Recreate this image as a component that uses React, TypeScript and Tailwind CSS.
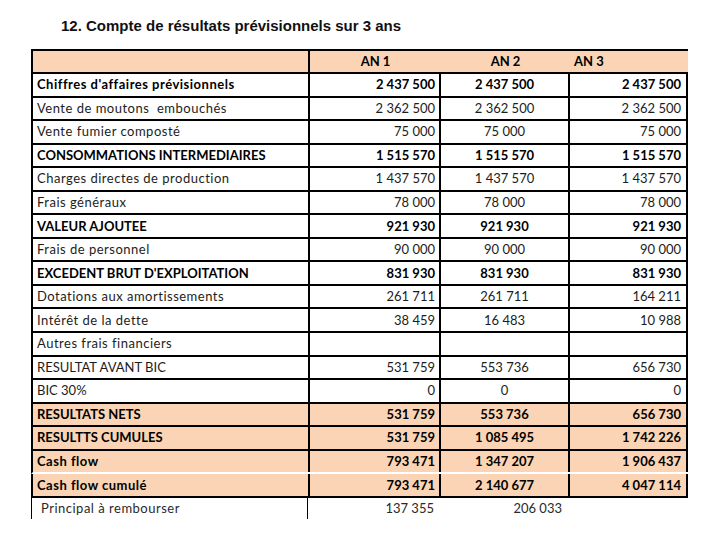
import React from "react"

type Row = {
  label: string
  values: string[]
  bold?: boolean
  peach?: boolean
  whiteLine?: boolean
}

const rows: Row[] = [
  { label: "Chiffres d'affaires prévisionnels", values: ["2 437 500", "2 437 500", "2 437 500"], bold: true },
  { label: "Vente de moutons  embouchés", values: ["2 362 500", "2 362 500", "2 362 500"] },
  { label: "Vente fumier composté", values: ["75 000", "75 000", "75 000"] },
  { label: "CONSOMMATIONS INTERMEDIAIRES", values: ["1 515 570", "1 515 570", "1 515 570"], bold: true },
  { label: "Charges directes de production", values: ["1 437 570", "1 437 570", "1 437 570"] },
  { label: "Frais généraux", values: ["78 000", "78 000", "78 000"] },
  { label: "VALEUR AJOUTEE", values: ["921 930", "921 930", "921 930"], bold: true },
  { label: "Frais de personnel", values: ["90 000", "90 000", "90 000"] },
  { label: "EXCEDENT BRUT D'EXPLOITATION", values: ["831 930", "831 930", "831 930"], bold: true },
  { label: "Dotations aux amortissements", values: ["261 711", "261 711", "164 211"] },
  { label: "Intérêt de la dette", values: ["38 459", "16 483", "10 988"] },
  { label: "Autres frais financiers", values: ["", "", ""] },
  { label: "RESULTAT AVANT BIC", values: ["531 759", "553 736", "656 730"] },
  { label: "BIC 30%", values: ["0", "0", "0"] },
  { label: "RESULTATS NETS", values: ["531 759", "553 736", "656 730"], bold: true, peach: true },
  { label: "RESULTTS CUMULES", values: ["531 759", "1 085 495", "1 742 226"], bold: true, peach: true },
  { label: "Cash flow", values: ["793 471", "1 347 207", "1 906 437"], bold: true, peach: true, whiteLine: true },
  { label: "Cash flow cumulé", values: ["793 471", "2 140 677", "4 047 114"], bold: true, peach: true },
]

const cols = "grid grid-cols-[277px_131px_129px_118px]"

function TableRow({ row }: { row: Row }) {
  // lowercase labels run a bit wider in the original font
  const mixed = row.label !== row.label.toUpperCase()
  return (
    <div
      className={`${cols} h-[23.56px] border-l-2 border-b-2 border-l-black ${
        row.whiteLine ? "border-b-white" : "border-b-black"
      } ${row.peach ? "bg-[#fad4b4]" : "bg-white"} ${row.bold ? "font-bold text-black" : "text-[#1c1c1c]"}`}
    >
      <div
        className={`flex items-center border-r-2 border-black pl-[4px] whitespace-pre ${
          mixed ? "tracking-[0.5px]" : ""
        }`}
      >
        {row.label}
      </div>
      <div className="flex items-center justify-end border-r-2 border-black pr-[4px]">{row.values[0]}</div>
      <div className="flex items-center justify-center border-r-2 border-black">{row.values[1]}</div>
      <div className="flex items-center justify-end border-r-2 border-black pr-[5px]">{row.values[2]}</div>
    </div>
  )
}

export default function App() {
  return (
    <div className="w-[720px] h-[540px] bg-white overflow-hidden">
      <div className="pt-[18px] pl-[61px] font-['Liberation_Sans',Arial,sans-serif] text-[15px] leading-[16px] font-bold text-[#111]">
        12. Compte de résultats prévisionnels sur 3 ans
      </div>

      <div className="mt-[15px] ml-[31px] w-[657px] font-['Lato','Open_Sans',sans-serif] text-[13px] leading-none">
        {/* Header */}
        <div className={`${cols} h-[25px] border-l-2 border-t-2 border-b-2 border-black bg-[#fad4b4] font-bold text-black`}>
          <div className="border-r-2 border-black"></div>
          <div className="flex items-center justify-center">AN 1</div>
          <div className="flex items-center justify-center">AN 2</div>
          <div className="flex items-center pl-[4px]">AN 3</div>
        </div>

        {rows.map((row) => (
          <TableRow key={row.label} row={row} />
        ))}

        {/* Principal row, open at the bottom */}
        <div className={`${cols} h-[21px] text-[#2a2a2a]`}>
          <div className="flex items-center border-l border-r border-black pl-[9px] tracking-[0.5px]">
            Principal à rembourser
          </div>
          <div className="flex items-center justify-end pr-[5px]">137 355</div>
          <div className="flex items-center justify-end pr-[6px]">206 033</div>
          <div></div>
        </div>
      </div>
    </div>
  )
}
